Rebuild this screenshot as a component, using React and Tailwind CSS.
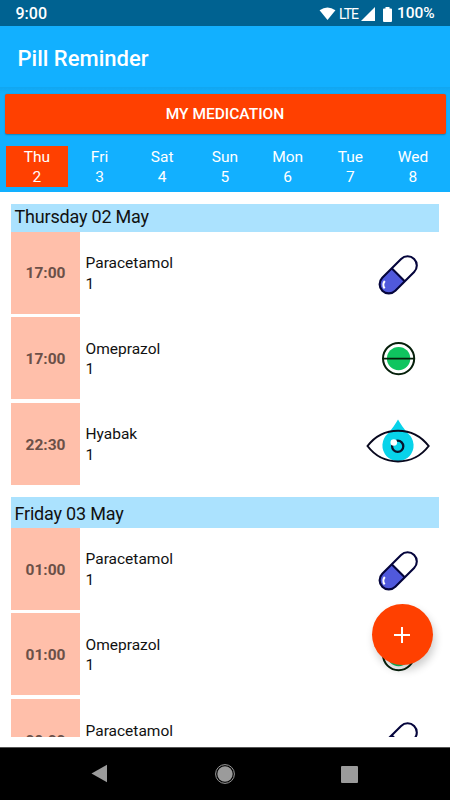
import React from "react";

const days = [
  ["Thu", 2],
  ["Fri", 3],
  ["Sat", 4],
  ["Sun", 5],
  ["Mon", 6],
  ["Tue", 7],
  ["Wed", 8],
];

const groups = [
  {
    title: "Thursday 02 May",
    items: [
      ["17:00", "Paracetamol", 1, "capsule"],
      ["17:00", "Omeprazol", 1, "tablet"],
      ["22:30", "Hyabak", 1, "eye"],
    ],
  },
  {
    title: "Friday 03 May",
    items: [
      ["01:00", "Paracetamol", 1, "capsule"],
      ["01:00", "Omeprazol", 1, "tablet"],
      ["09:00", "Paracetamol", 1, "capsule"],
    ],
  },
];

function Capsule() {
  return (
    <svg width="66" height="66" viewBox="0 0 66 66" fill="none">
      <g transform="translate(33.2 34.8) rotate(-45)">
        <path d="M0-9.2H-13.3a9.2 9.2 0 0 0 0 18.4H0Z" fill="#5059dc" />
        <rect x="-22.5" y="-9.2" width="45" height="18.4" rx="9.2" stroke="#05053c" strokeWidth="2.1" />
        <path d="M0-9.2v18.4" stroke="#05053c" strokeWidth="2.1" />
      </g>
      <path d="M19.8 41q-3 3.6-.2 7.3" stroke="#fff" strokeWidth="2" />
    </svg>
  );
}

function Tablet() {
  return (
    <svg width="66" height="66" viewBox="0 0 66 66" fill="none">
      <circle cx="33.6" cy="33.6" r="11.7" fill="#0fc55f" />
      <circle cx="33.6" cy="33.6" r="15.6" stroke="#06200b" strokeWidth="2" />
      <path d="M17.9 33.6h31.4" stroke="#06200b" strokeWidth="1.8" />
    </svg>
  );
}

function Eye() {
  return (
    <svg width="66" height="66" viewBox="0 0 66 66" fill="none">
      <path d="M33 8.5C35.5 13 38.5 17 43 22.5A15.6 15.6 0 1 1 23 22.5C27.5 17 30.5 13 33 8.5Z" fill="#08d3ea" />
      <path d="M2.5 35C18 14.5 48 14.5 63.7 35C48 55.5 18 55.5 2.5 35Z" stroke="#08081e" strokeWidth="2" />
      <circle cx="32.7" cy="35.3" r="5.6" stroke="#08142c" strokeWidth="2.3" />
      <circle cx="28.8" cy="31.5" r="3.3" fill="#fff" />
    </svg>
  );
}

const icons = { capsule: Capsule, tablet: Tablet, eye: Eye };

function Row({ item: [time, name, count, icon] }) {
  const Icon = icons[icon];
  return (
    <div className="flex h-[82px] shrink-0">
      <div className="flex w-[69px] items-center justify-center bg-[#ffbfaa] pt-[3px] text-[15.5px] font-bold text-[#6b5048]">
        {time}
      </div>
      <div className="flex flex-1 flex-col justify-center pt-[2px] pl-[5.5px] text-[15.5px] leading-[20.5px] text-[#111]">
        <span>{name}</span>
        <span>{count}</span>
      </div>
      <div className="mr-[8px] flex w-[66px] items-center">
        <Icon />
      </div>
    </div>
  );
}

export default function App() {
  return (
    <div className="relative flex h-[800px] w-[450px] flex-col overflow-hidden bg-white font-['Roboto',sans-serif]">
      <div className="flex h-[26px] shrink-0 items-center bg-[#006291] px-[15.5px] pt-[2px] text-[16px] font-medium text-white">
        <span className="flex-1">9:00</span>
        <svg className="mr-[3.5px]" width="17" height="14" viewBox="0 0 17 15">
          <path d="M0 3.5Q8.5-2.5 17 3.5L8.5 14Z" fill="#fff" />
        </svg>
        <span className="mr-[4px] w-[18px] text-[14px] font-normal tracking-[-1px]">LTE</span>
        <svg className="mr-[8px]" width="14" height="14" viewBox="0 0 14 14">
          <path d="M14 0v14H0Z" fill="#fff" />
        </svg>
        <svg className="mr-[5px]" width="9" height="15" viewBox="0 0 9 15">
          <path d="M2.5 0h4v1.5H8a1 1 0 0 1 1 1V14a1 1 0 0 1-1 1H1a1 1 0 0 1-1-1V2.5a1 1 0 0 1 1-1h1.500Z" fill="#fff" />
        </svg>
        <span className="text-[15.5px] tracking-[-0.1px]">100%</span>
      </div>
      <header className="flex h-[61px] shrink-0 items-center bg-[#12b0ff] pt-[3px] pl-[17.5px] text-[22px] font-medium text-white">
        Pill Reminder
      </header>
      <section className="h-[105px] shrink-0 bg-[#12b0ff]">
        <div className="h-[7px] bg-linear-to-b from-[#11a6f0] to-[#12b0ff]" />
        <button className="mx-[4.5px] flex h-[39.5px] w-[441px] items-center justify-center rounded-[2px] bg-[#ff4000] pt-[1.5px] text-[15.5px] font-medium text-white shadow-[0_0.5px_1.5px_rgba(0,0,0,0.25)]">
          MY MEDICATION
        </button>
        <div className="mt-[12px] ml-[5.5px] flex">
          {days.map(([d, n], i) => (
            <div
              key={d}
              className={
                "flex h-[41.5px] w-[62.7px] flex-col items-center pt-[1px] text-[15.5px] leading-[20.5px] text-white " +
                (i === 0 ? "bg-[#ff4000]" : "")
              }
            >
              <span>{d}</span>
              <span>{n}</span>
            </div>
          ))}
        </div>
      </section>
      <main className="mx-[11px] mt-[11.5px] h-[533px] w-[428px] shrink-0 overflow-hidden">
        <div className="-mt-[2.7px] flex flex-col gap-[12.3px]">
          {groups.map((g) => (
            <div key={g.title}>
              <div className="flex h-[30.7px] items-center bg-[#abe2fe] pt-[1.5px] pl-[3.5px] text-[18px] tracking-[-0.2px] text-[#111]">
                {g.title}
              </div>
              <div className="flex flex-col gap-[3.67px]">
                {g.items.map((item, i) => (
                  <Row key={i} item={item} />
                ))}
              </div>
            </div>
          ))}
        </div>
      </main>
      <button
        aria-label="Add"
        className="absolute top-[604px] left-[371.5px] flex h-[61px] w-[61px] items-center justify-center rounded-full bg-[#ff4000] shadow-[2px_5px_9px_rgba(0,0,0,0.2)]"
      >
        <svg width="16" height="16" viewBox="0 0 16 16">
          <path d="M8 0v16M0 8h16" stroke="#fff" strokeWidth="2" />
        </svg>
      </button>
      <nav className="mt-auto flex h-[53px] shrink-0 items-center justify-between border-t border-[#555] bg-black pr-[92px] pl-[91px]">
        <svg width="17" height="20" viewBox="0 0 17 20">
          <path d="M.5 9.5 16 .8v17.5Z" fill="#9b9b9b" />
        </svg>
        <svg width="20" height="20" viewBox="0 0 20 20">
          <circle cx="10" cy="10" r="7.7" fill="#9b9b9b" />
          <circle cx="10" cy="10" r="9.4" fill="none" stroke="#9b9b9b" />
        </svg>
        <span className="h-[17px] w-[17px] rounded-[1px] bg-[#9b9b9b]" />
      </nav>
    </div>
  );
}
